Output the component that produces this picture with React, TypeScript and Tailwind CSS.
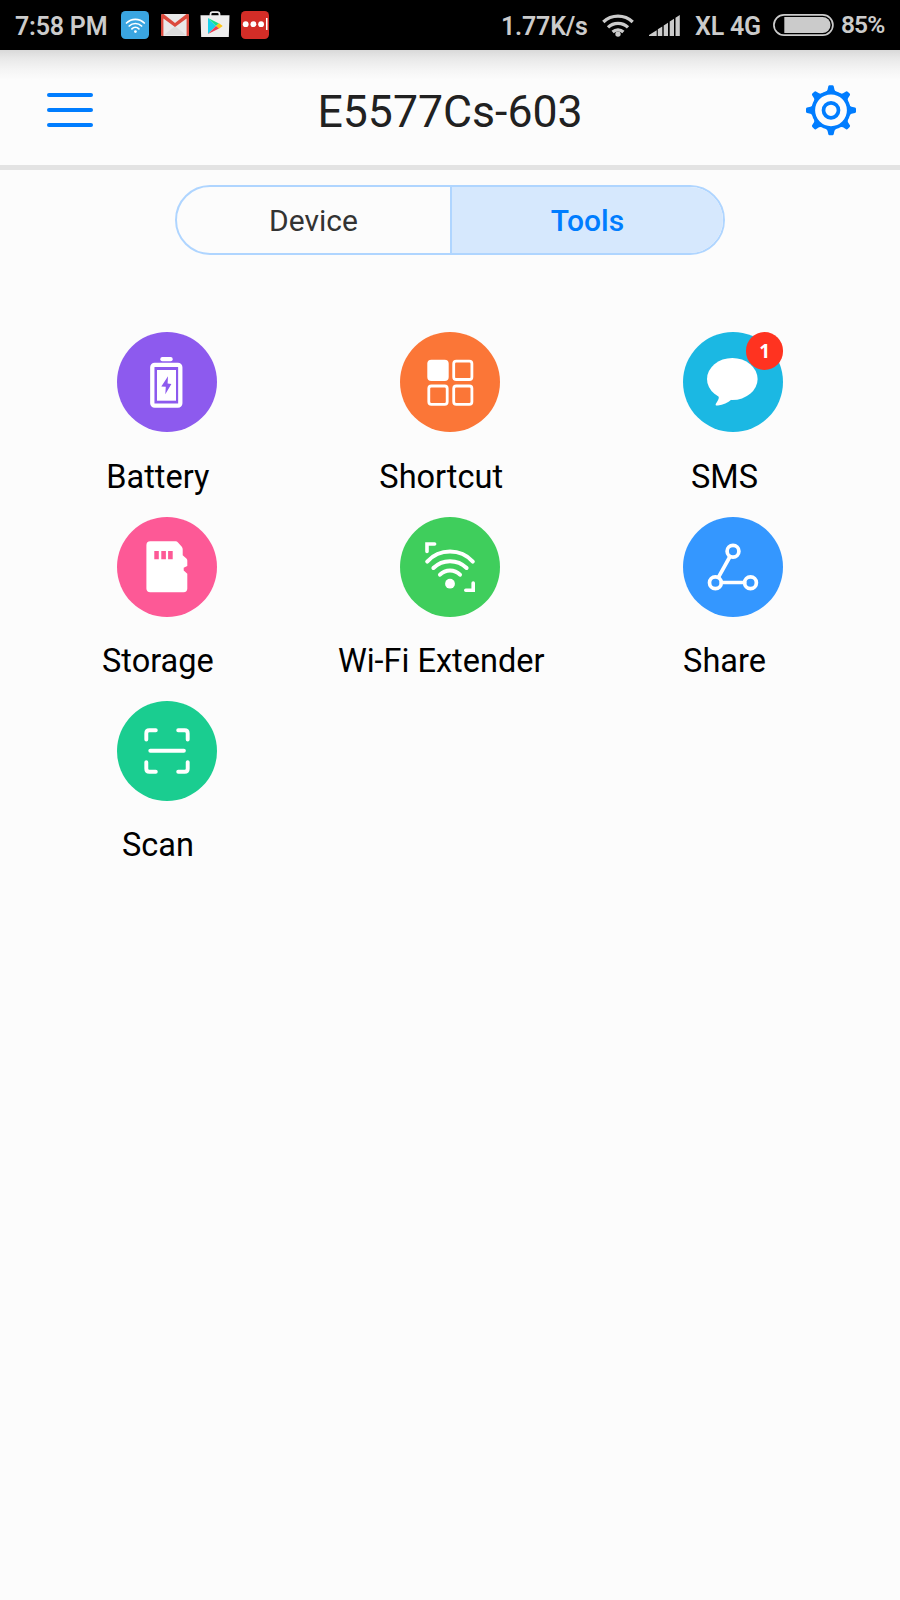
import type { ReactNode } from "react";

const iconStroke = {
  fill: "none",
  stroke: "#fff",
  strokeLinecap: "round",
  strokeLinejoin: "round",
} as const;

function BatteryIcon() {
  return (
    <svg viewBox="0 0 100 100" className="size-full">
      <rect x="43.3" y="25" width="12.4" height="4.3" rx="2" fill="#fff" />
      <rect x="35.3" y="32.8" width="28" height="40.8" rx="2.4" fill="none" stroke="#fff" strokeWidth="4.3" />
      <rect x="40" y="38" width="19" height="30.7" fill="#fff" />
      <path d="M51 44.3 44.3 54.4 48.8 54.8 48.3 62.3 54.4 52 50.6 51.6Z" fill="#8d5aee" />
    </svg>
  );
}

function ShortcutIcon() {
  return (
    <svg viewBox="0 0 100 100" className="size-full">
      <rect x="27.3" y="27.7" width="21.4" height="21.3" rx="4" fill="#fff" />
      <g fill="none" stroke="#fff" strokeWidth="2.8">
        <rect x="53.7" y="29.1" width="18.2" height="18.4" rx="2.6" />
        <rect x="28.8" y="54" width="18.4" height="18.4" rx="2.6" />
        <rect x="53.7" y="54" width="18.2" height="18.4" rx="2.6" />
      </g>
    </svg>
  );
}

function SmsIcon() {
  return (
    <svg viewBox="0 0 100 100" className="size-full">
      <ellipse cx="49.3" cy="47" rx="25.3" ry="21" fill="#fff" />
      <path d="M34 62.5C37 65 36 67 33 71.5C32 73.5 33 73.8 35 73.4C40 73 45 70.5 48.5 67.5Z" fill="#fff" />
    </svg>
  );
}

function StorageIcon() {
  return (
    <svg viewBox="0 0 100 100" className="size-full">
      <path
        d="M33.3 24.3H58.6Q60 24.3 61 25.4L64.8 29.8Q65.7 31 65.7 32.4V38.3L69.4 41.6Q70.3 42.4 70.3 43.6V49L66.7 50.8V53.6L70.3 56.8V71.6Q70.3 75.3 66.6 75.3H33.3Q29.4 75.3 29.4 71.6V28.2Q29.4 24.3 33.3 24.3Z"
        fill="#fff"
      />
      <path d="M37.3 34H41.8V42.3H37.3ZM44.3 34H48.9V42.3H44.3ZM51.1 34H55.7V42.3H51.1Z" fill="#fd5996" />
    </svg>
  );
}

function ExtenderIcon() {
  return (
    <svg viewBox="0 0 100 100" className="size-full">
      <g {...iconStroke} strokeWidth="4">
        <path d="M27.2 44.6A31 31 0 0 1 72.8 44.6" />
        <path d="M33.4 51A23.5 23.5 0 0 1 66.6 51" />
        <path d="M40 57.7A14 14 0 0 1 60 57.7" />
      </g>
      <g {...iconStroke} strokeWidth="3.6" strokeLinejoin="miter">
        <path d="M27 34.5V27H34.6" />
        <path d="M73.2 66V73.3H65.8" />
      </g>
      <circle cx="50" cy="66.7" r="4.9" fill="#fff" />
    </svg>
  );
}

function ShareIcon() {
  return (
    <svg viewBox="0 0 100 100" className="size-full">
      <g {...iconStroke} strokeWidth="3.7">
        <circle cx="50" cy="34.3" r="5.9" />
        <circle cx="32.4" cy="65.7" r="5.9" />
        <circle cx="67.5" cy="65.7" r="5.9" />
        <path d="M47 39.5 35.4 60.4M38.4 65.5H61.6" />
      </g>
    </svg>
  );
}

function ScanIcon() {
  return (
    <svg viewBox="0 0 100 100" className="size-full">
      <g {...iconStroke} strokeWidth="3.9">
        <path d="M29.3 38.6V32.3Q29.3 29.3 32.3 29.3H38.8" />
        <path d="M61.2 29.3H67.7Q70.7 29.3 70.7 32.3V38.6" />
        <path d="M29.3 61.1V67.7Q29.3 70.7 32.3 70.7H38.8" />
        <path d="M61.2 70.7H67.7Q70.7 70.7 70.7 67.7V61.1" />
        <path d="M33.3 49.7H66.9" />
      </g>
    </svg>
  );
}

type Tool = {
  label: string;
  color: string;
  icon: ReactNode;
  badge?: number;
};

const tools: Tool[] = [
  { label: "Battery", color: "bg-[#8d5aee]", icon: <BatteryIcon /> },
  { label: "Shortcut", color: "bg-[#fb7637]", icon: <ShortcutIcon /> },
  { label: "SMS", color: "bg-[#1bb8e3]", icon: <SmsIcon />, badge: 1 },
  { label: "Storage", color: "bg-[#fd5996]", icon: <StorageIcon /> },
  { label: "Wi-Fi Extender", color: "bg-[#3fce5c]", icon: <ExtenderIcon /> },
  { label: "Share", color: "bg-[#3497ff]", icon: <ShareIcon /> },
  { label: "Scan", color: "bg-[#1acd90]", icon: <ScanIcon /> },
];

function StatusBar() {
  return (
    <div className="flex h-[50px] items-center justify-between bg-black pl-[15px] pr-4 text-[25px] font-semibold leading-none tracking-[-0.2px] text-[#cbcbcb]">
      <div className="flex items-center">
        <span className="w-[106px] whitespace-nowrap pt-0.5">7:58 PM</span>
        <svg viewBox="0 0 28 28" className="size-7">
          <rect width="28" height="28" rx="4.5" fill="#3aa5e1" />
          <g fill="none" stroke="#fff" strokeWidth="1.7" strokeLinecap="round">
            <path d="M5.5 12A12.5 12.5 0 0 1 23.3 12" />
            <path d="M8.2 15A9 9 0 0 1 20.6 15" />
            <path d="M10.9 17.9A5 5 0 0 1 17.9 17.9" />
          </g>
          <circle cx="14.4" cy="20.6" r="1.4" fill="#fff" />
        </svg>
        <svg viewBox="0 0 28 22" className="ml-3 h-[22px] w-7">
          <rect width="28" height="22" rx="1.5" fill="#e9e9e9" />
          <path d="M3 21 14 12 25 21Z" fill="#dcdcdc" />
          <path d="M0 1.5Q0 0 1.5 0H2.5L14 9 25.5 0H26.5Q28 0 28 1.5V20.5Q28 22 26.5 22H25.6V4.6L14 13 2.4 4.6V22H1.5Q0 22 0 20.5Z" fill="#dc4a3d" />
        </svg>
        <svg viewBox="0 0 30 28" className="ml-[11px] h-7 w-[30px]">
          <path d="M10.5 5V3.2Q10.5 1.2 12.5 1.2H17.5Q19.5 1.2 19.5 3.2V5" fill="none" stroke="#e9e9e9" strokeWidth="1.8" />
          <path d="M.5 4.3H29.5L28.8 26H1.2Z" fill="#eee" />
          <path d="M8 7 16 15 8 23Z" fill="#19d0ec" />
          <path d="M8 7 19 12.5 16 15Z" fill="#19e08c" />
          <path d="M19 12.2 22.7 15 19 17.8 16 15Z" fill="#fdc516" />
          <path d="M8 23 16 15 19 17.6Z" fill="#ef3e52" />
        </svg>
        <svg viewBox="0 0 28 28" className="ml-[11px] size-7">
          <rect width="28" height="28" rx="4.5" fill="#d32d27" />
          <g fill="#fff">
            <circle cx="4.7" cy="13.2" r="2.9" />
            <circle cx="12.4" cy="13.2" r="2.9" />
            <circle cx="20.1" cy="13.2" r="2.9" />
            <rect x="25" y="7" width="1.5" height="12" />
          </g>
        </svg>
      </div>
      <div className="flex items-center">
        <span className="w-[101px] whitespace-nowrap pt-0.5">1.77K/s</span>
        <svg viewBox="0 0 32 24" className="h-6 w-8">
          <g fill="none" stroke="#cbcbcb" strokeWidth="3.3">
            <path d="M1.3 9A21.5 21.5 0 0 1 30.7 9" />
            <path d="M6 14.4A14.5 14.5 0 0 1 26 14.4" />
            <path d="M10.6 19A8 8 0 0 1 21.4 19" />
          </g>
          <circle cx="16" cy="21.1" r="2.7" fill="#cbcbcb" />
        </svg>
        <svg viewBox="0 0 31 22" className="ml-[15px] h-[22px] w-[31px]">
          <path
            d="M0 22V21L7.7 16.2V22ZM8.8 22V15.3L13.3 12.5V22ZM14.7 22V11.5L19 8.7V22ZM20.7 22V7.6L25 4.8V22ZM26.5 22V3.7L30.8 1V22Z"
            fill="#cbcbcb"
          />
        </svg>
        <span className="ml-[15px] w-[78px] whitespace-nowrap pt-0.5">XL 4G</span>
        <svg viewBox="0 0 61 22" className="h-[22px] w-[61px]">
          <rect x=".9" y=".9" width="59" height="20.2" rx="10.1" fill="none" stroke="#cbcbcb" strokeWidth="1.7" />
          <path d="M11.3 3H49.5A8 8 0 0 1 49.5 19H11.3Z" fill="#cbcbcb" />
        </svg>
        <span className="ml-[7px] w-[43px] whitespace-nowrap pt-px text-[24.5px] tracking-[-0.9px]">85%</span>
      </div>
    </div>
  );
}

function GearIcon() {
  const teeth = [0, 45, 90, 135, 180, 225, 270, 315];

  return (
    <svg viewBox="-25 -25.3 50 50" className="size-[50px] overflow-visible">
      <circle r="17.7" fill="none" stroke="#007dff" strokeWidth="3.6" />
      <circle r="7.5" fill="none" stroke="#007dff" strokeWidth="3.7" />
      {teeth.map((angle) => (
        <path
          key={angle}
          transform={`rotate(${angle})`}
          d="M-6-18Q-4-19-3.5-20.5L-2.7-24Q-2.4-25-1.4-25H1.4Q2.4-25 2.7-24L3.5-20.5Q4-19 6-18Z"
          fill="#007dff"
        />
      ))}
    </svg>
  );
}

function Header() {
  return (
    <header className="flex h-[120px] items-center justify-between border-b-[5px] border-[#e3e3e3] bg-[linear-gradient(#d9d9d9,#e8e8e8_8px,#f5f5f5_20px,#fcfcfc_30px)] pl-[47px] pr-11 pt-[5px]">
      <button className="flex w-[46px] flex-col gap-[11px]">
        <span className="h-1 rounded-full bg-[#007dff]" />
        <span className="h-1 rounded-full bg-[#007dff]" />
        <span className="h-1 rounded-full bg-[#007dff]" />
      </button>
      <h1 className="pl-px pt-[5px] text-[44.6px] leading-none text-[#212121]">E5577Cs-603</h1>
      <button>
        <GearIcon />
      </button>
    </header>
  );
}

export default function App() {
  return (
    <div className="h-[1600px] w-[900px] overflow-hidden bg-[#fcfcfc] font-[Roboto,sans-serif]">
      <StatusBar />
      <Header />

      <div className="mx-auto mt-[15px] flex h-[70px] w-[550px] overflow-hidden rounded-full border-2 border-[#afd5ff] text-[30px]">
        <button className="w-[273px] text-[#333]">Device</button>
        <button className="flex-1 border-l-2 border-[#afd5ff] bg-[#d6e8fd] font-medium text-[#007dff]">
          Tools
        </button>
      </div>

      <main className="mx-[25px] mt-[77.4px] grid auto-rows-[184.2px] grid-cols-3">
        {tools.map((tool) => (
          <div key={tool.label} className="flex flex-col items-center">
            <div className={`relative size-[100px] rounded-full ${tool.color}`}>
              {tool.icon}
              {tool.badge && (
                <span className="absolute right-0 top-0 flex size-[37.5px] items-center justify-center rounded-full bg-[#ff3320] font-['Noto_Sans',sans-serif] text-[19px] font-bold leading-none text-white">
                  {tool.badge}
                </span>
              )}
            </div>
            <span className="mr-[17.6px] mt-[28.6px] text-[32.5px] leading-[32px] text-black">{tool.label}</span>
          </div>
        ))}
      </main>
    </div>
  );
}
